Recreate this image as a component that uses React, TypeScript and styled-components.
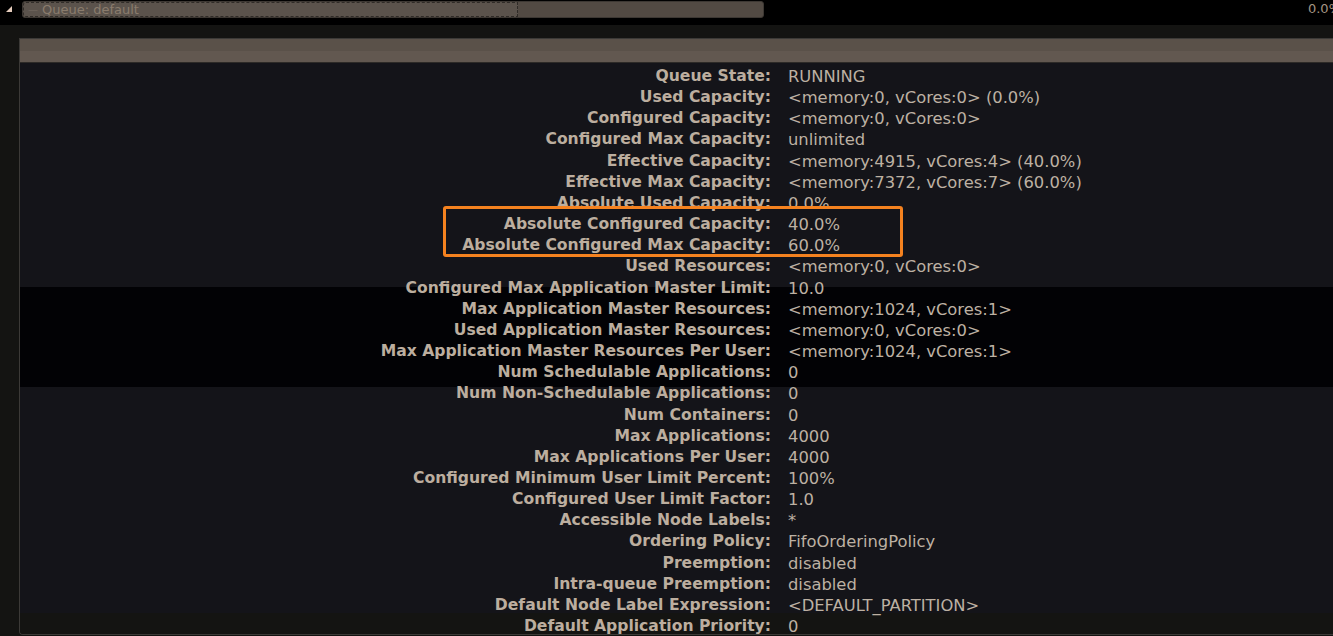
import React from "react";
import styled, { createGlobalStyle } from "styled-components";

const Global = createGlobalStyle`
  html, body { margin: 0; padding: 0; background: #141412; overflow: hidden; }
  body { font-family: "DejaVu Sans", Verdana, sans-serif; }
  * { box-sizing: border-box; }
`;

const Page = styled.div`
  width: 1333px;
  height: 636px;
  overflow: hidden;
  background: #141412;
`;

const TopBar = styled.div`
  height: 25px;
  background: #000;
  display: flex;
  align-items: flex-start;
  overflow: hidden;
`;

const Toggle = styled.svg`
  width: 6px;
  height: 6px;
  margin: 6px 0 0 6px;
  flex: none;
`;

const Progress = styled.div`
  margin: 1px 0 0 10px;
  width: 742px;
  height: 17px;
  background: #524a43;
  border: 1px solid #3d3833;
  border-radius: 3px;
  display: flex;
  flex: none;
`;

const QueueLabel = styled.div`
  width: 495px;
  height: 100%;
  background: #5b534c;
  border: 1px dashed #2f2b27;
  border-radius: 3px 0 0 3px;
  display: flex;
  align-items: center;
  gap: 4px;
  padding-left: 4px;
  font-size: 13px;
  color: #8a7c6d;
  white-space: nowrap;
`;

const Dash = styled.span`
  color: #6d645b;
  font-size: 10px;
`;

const Percent = styled.div`
  margin-left: auto;
  margin-right: -8px;
  margin-top: 1px;
  font-size: 13px;
  color: #a39483;
  white-space: nowrap;
`;

const Panel = styled.div`
  position: relative;
  margin: 13px 0 0 19px;
  width: 1330px;
  height: 597px;
  border: 1px solid #3c3a37;
  border-right: none;
  border-bottom-left-radius: 4px;
  overflow: hidden;
`;

const PanelHeader = styled.div`
  height: 24px;
  background: linear-gradient(#5a5149 0, #5a5149 12px, #625850 12px, #625850 23px, #2d2a27 23px);
`;

const Table = styled.div`
  display: grid;
  grid-template-columns: 751px 1fr;
  column-gap: 17px;
  padding-top: 3px;
  background: linear-gradient(
    #141419 0,
    #141419 224px,
    #020205 224px,
    #020205 324px,
    #141419 324px,
    #141419 550px,
    #141412 550px
  );
  height: 573px;
  align-content: start;
`;

const Label = styled.div`
  text-align: right;
  font-weight: bold;
  font-size: 15.6px;
  line-height: 21.15px;
  color: #bcae9f;
  white-space: nowrap;
`;

const Value = styled.div`
  font-size: 16.35px;
  line-height: 21.15px;
  color: #bdb1a3;
  white-space: nowrap;
`;

const Highlight = styled.div`
  position: absolute;
  left: 423px;
  top: 167px;
  width: 460px;
  height: 51px;
  border: 3px solid #f5821f;
  border-radius: 3px;
  pointer-events: none;
`;

const rows: [string, string][] = [
  ["Queue State:", "RUNNING"],
  ["Used Capacity:", "<memory:0, vCores:0> (0.0%)"],
  ["Configured Capacity:", "<memory:0, vCores:0>"],
  ["Configured Max Capacity:", "unlimited"],
  ["Effective Capacity:", "<memory:4915, vCores:4> (40.0%)"],
  ["Effective Max Capacity:", "<memory:7372, vCores:7> (60.0%)"],
  ["Absolute Used Capacity:", "0.0%"],
  ["Absolute Configured Capacity:", "40.0%"],
  ["Absolute Configured Max Capacity:", "60.0%"],
  ["Used Resources:", "<memory:0, vCores:0>"],
  ["Configured Max Application Master Limit:", "10.0"],
  ["Max Application Master Resources:", "<memory:1024, vCores:1>"],
  ["Used Application Master Resources:", "<memory:0, vCores:0>"],
  ["Max Application Master Resources Per User:", "<memory:1024, vCores:1>"],
  ["Num Schedulable Applications:", "0"],
  ["Num Non-Schedulable Applications:", "0"],
  ["Num Containers:", "0"],
  ["Max Applications:", "4000"],
  ["Max Applications Per User:", "4000"],
  ["Configured Minimum User Limit Percent:", "100%"],
  ["Configured User Limit Factor:", "1.0"],
  ["Accessible Node Labels:", "*"],
  ["Ordering Policy:", "FifoOrderingPolicy"],
  ["Preemption:", "disabled"],
  ["Intra-queue Preemption:", "disabled"],
  ["Default Node Label Expression:", "<DEFAULT_PARTITION>"],
  ["Default Application Priority:", "0"],
];

export default function App() {
  return (
    <Page>
      <Global />
      <TopBar>
        <Toggle viewBox="0 0 6 6">
          <polygon points="6,0 6,6 0,6" fill="#e6cdbd" />
        </Toggle>
        <Progress>
          <QueueLabel>
            <Dash>—</Dash>
            <span>Queue: default</span>
          </QueueLabel>
        </Progress>
        <Percent>0.0%</Percent>
      </TopBar>
      <Panel>
        <PanelHeader />
        <Table>
          {rows.map(([k, v]) => (
            <React.Fragment key={k}>
              <Label>{k}</Label>
              <Value>{v}</Value>
            </React.Fragment>
          ))}
        </Table>
        <Highlight />
      </Panel>
    </Page>
  );
}
